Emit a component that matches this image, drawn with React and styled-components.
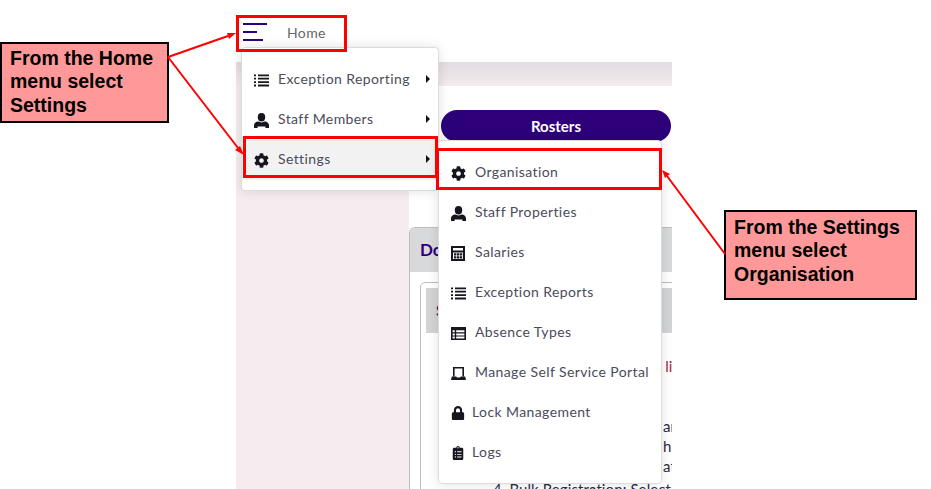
import React from 'react';
import styled, { createGlobalStyle } from 'styled-components';
import { FaCog, FaLock, FaClipboardList } from 'react-icons/fa';

const GlobalStyle = createGlobalStyle`
    html, body {
        margin: 0;
        background: #fff;
    }
    * {
        box-sizing: border-box;
    }
`;

const Page = styled.div`
    position: relative;
    width: 931px;
    height: 489px;
    overflow: hidden;
    background: #fff;
    padding-left: 236px;
    font-family: Lato, 'Noto Sans', sans-serif;
`;

const Frame = styled.div`
    position: relative;
    width: 436px;
    height: 489px;
    overflow: hidden;
    display: flex;
    flex-direction: column;
`;

const Navbar = styled.div`
    height: 62px;
    flex: none;
    padding: 23px 0 0 7px;
    background: #fff;
`;

const HomeLink = styled.div`
    display: flex;
    align-items: center;
    gap: 20px;
    height: 18px;
    color: #666;
    font-size: 14px;
    letter-spacing: 0.4px;
`;

const Body = styled.div`
    flex: 1;
    display: flex;
    min-height: 0;
    background: #f5ecef;
`;

const Sidebar = styled.div`
    width: 173px;
    flex: none;
    background: linear-gradient(#e2dbdf, #f5ecef 24px);
`;

const Content = styled.div`
    flex: 1;
    display: flex;
    flex-direction: column;
    min-width: 0;
`;

const Band = styled.div`
    height: 24px;
    flex: none;
    background: linear-gradient(#e2dbdf, #f3ebee);
`;

const Main = styled.div`
    flex: 1;
    background: #fff;
    padding-top: 24px;
    overflow: hidden;
`;

const RostersButton = styled.div`
    width: 230px;
    height: 32px;
    margin-left: 32px;
    padding-bottom: 1px;
    border-radius: 16px;
    background: #2d007a;
    color: #fff;
    font-size: 15px;
    font-weight: 700;
    display: flex;
    align-items: center;
    justify-content: center;
`;

const Panel = styled.div`
    width: 340px;
    margin-top: 85px;
    border: 1px solid #bdbdbd;
    border-bottom: 0;
    border-radius: 6px 0 0 0;
    padding-bottom: 20px;
`;

const PanelHeader = styled.div`
    height: 44px;
    padding-left: 10px;
    background: #d8d9db;
    color: #2d007a;
    font-size: 17px;
    font-weight: 700;
    line-height: 44px;
    border-radius: 5px 0 0 0;
`;

const InnerCard = styled.div`
    margin: 10px 0 0 10px;
    border: 1px solid #bdbdbd;
    border-radius: 5px 0 0 0;
    padding: 5px;
    height: 260px;
`;

const InnerHeader = styled.div`
    height: 45px;
    padding-left: 10px;
    background: #d3d4d6;
    color: #33273f;
    font-size: 15px;
    font-weight: 700;
    line-height: 45px;
`;

const NoteLine = styled.div`
    white-space: nowrap;
    font-size: 15px;
    letter-spacing: 0.1px;
    line-height: 20px;
    height: 20px;
    color: ${(p) => p.$color || '#2a2a44'};
    margin-top: ${(p) => p.$gap || 0}px;
    margin-left: ${(p) => p.$indent || 0}px;
`;

const Dropdown = styled.div`
    position: absolute;
    left: ${(p) => p.$left}px;
    top: ${(p) => p.$top}px;
    width: ${(p) => p.$width}px;
    padding: 12px 0 10px;
    background: #fff;
    border: 1px solid #dcdcdc;
    border-radius: 4px;
    box-shadow: 0 0 12px rgba(0, 0, 0, 0.12);
    z-index: 2;
`;

const MenuItem = styled.div`
    display: flex;
    align-items: center;
    height: 40px;
    padding-left: 12px;
    color: #4b4b5a;
    font-size: 14px;
    letter-spacing: 0.4px;
    background: ${(p) => (p.$active ? '#f2f2f2' : 'transparent')};
`;

const MenuIcon = styled.span`
    display: flex;
    align-items: center;
    width: ${(p) => (p.$narrow ? 21 : 24)}px;
    flex: none;
    color: #16161e;
    font-size: ${(p) => (p.$narrow ? 14 : 15)}px;
`;

const MenuLabel = styled.span`
    padding-bottom: 3px;
`;

const Caret = styled.span`
    width: 0;
    height: 0;
    margin: -3px 8px 0 auto;
    border-top: 4px solid transparent;
    border-bottom: 4px solid transparent;
    border-left: 4px solid #111;
`;

const RedBox = styled.div`
    position: absolute;
    left: ${(p) => p.$left}px;
    top: ${(p) => p.$top}px;
    width: ${(p) => p.$width}px;
    height: ${(p) => p.$height}px;
    border: 3px solid #f00;
    z-index: 3;
`;

const Callout = styled.div`
    position: absolute;
    left: ${(p) => p.$left}px;
    top: ${(p) => p.$top}px;
    width: ${(p) => p.$width}px;
    height: ${(p) => p.$height}px;
    padding: ${(p) => p.$pad}px 0 0 8px;
    border: 2px solid #000;
    background: #ff9999;
    color: #000;
    font-family: 'Liberation Sans', Arial, sans-serif;
    font-size: 19.5px;
    font-weight: 700;
    line-height: 23.4px;
    z-index: 4;
`;

const Arrows = styled.svg`
    position: absolute;
    left: 0;
    top: 0;
    z-index: 4;
`;

const ListIcon = () => (
    <svg width="15" height="13" viewBox="0 0 15 13" fill="currentColor">
        <path d="M0 .4h2v1.8H0zM0 3.8h2v1.8H0zM0 7.2h2V9H0zM0 10.6h2v1.8H0z" />
        <path d="M4 .4h11v1.8H4zM4 3.8h11v1.8H4zM4 7.2h11V9H4zM4 10.6h11v1.8H4z" />
    </svg>
);

const PersonIcon = () => (
    <svg width="15" height="15" viewBox="0 0 15 15" fill="currentColor">
        <ellipse cx="7.5" cy="4.2" rx="3.7" ry="4.2" />
        <path
            fillRule="evenodd"
            d="M0 15v-2.6C0 10.2 2.4 8.6 4.4 8.6c1.4 1.1 4.8 1.1 6.2 0 2 0 4.4 1.6 4.4 3.8V15zM3.6 15h7.8v-1.4H3.6z"
        />
    </svg>
);

const CalculatorIcon = () => (
    <svg width="14" height="15" viewBox="0 0 14 15" fill="currentColor">
        <path fillRule="evenodd" d="M0 0h14v15H0zM2 2v2.6h10V2zM2 6.4V13h10V6.4z" />
        <path d="M3 7.2h2.4v2.2H3zM6 7.2h2.4v2.2H6zM9 7.2h2.2v2.2H9zM3 10.2h2.4v2.2H3zM6 10.2h2.4v2.2H6zM9 10.2h2.2v2.2H9z" />
    </svg>
);

const TableIcon = () => (
    <svg width="15" height="13" viewBox="0 0 15 13" fill="currentColor">
        <path
            fillRule="evenodd"
            d="M0 0h15v13H0zM1.6 3.2v2h2.2v-2zM5.2 3.2v2h8.2v-2zM1.6 6.4v2h2.2v-2zM5.2 6.4v2h8.2v-2zM1.6 9.6v2h2.2v-2zM5.2 9.6v2h8.2v-2z"
        />
    </svg>
);

const PortalIcon = () => (
    <svg width="15" height="13" viewBox="0 0 15 13" fill="currentColor">
        <path fillRule="evenodd" d="M2 0h11v9.6h-1.6V1.6H3.6v8H2z" />
        <path d="M.8 9.6h4.4l.8 1h3l.8-1h4.4L15 13H0z" />
    </svg>
);

const mainItems = [
    { icon: <ListIcon />, label: 'Exception Reporting', caret: true },
    { icon: <PersonIcon />, label: 'Staff Members', caret: true },
    { icon: <FaCog />, label: 'Settings', caret: true, active: true }
];

const settingsItems = [
    { icon: <FaCog />, label: 'Organisation' },
    { icon: <PersonIcon />, label: 'Staff Properties' },
    { icon: <CalculatorIcon />, label: 'Salaries' },
    { icon: <ListIcon />, label: 'Exception Reports' },
    { icon: <TableIcon />, label: 'Absence Types' },
    { icon: <PortalIcon />, label: 'Manage Self Service Portal' },
    { icon: <FaLock />, label: 'Lock Management', narrow: true },
    { icon: <FaClipboardList />, label: 'Logs', narrow: true }
];

const Menu = ({ items, ...rest }) => (
    <Dropdown {...rest}>
        {items.map((item) => (
            <MenuItem key={item.label} $active={item.active}>
                <MenuIcon $narrow={item.narrow}>{item.icon}</MenuIcon>
                <MenuLabel>{item.label}</MenuLabel>
                {item.caret && <Caret />}
            </MenuItem>
        ))}
    </Dropdown>
);

const HamburgerIcon = () => (
    <svg width="24" height="18" viewBox="0 0 24 18" fill="none" stroke="#2d007a" strokeWidth="2">
        <path d="M0 1h24M0 9h14M0 17h20" />
    </svg>
);

const ArrowLine = ({ d, head }) => (
    <>
        <path d={d} fill="none" stroke="#f00" strokeWidth="2" />
        <polygon points={head} fill="#f00" />
    </>
);

const App = () => (
    <Page>
        <GlobalStyle />
        <Frame>
            <Navbar>
                <HomeLink>
                    <HamburgerIcon />
                    Home
                </HomeLink>
            </Navbar>
            <Body>
                <Sidebar />
                <Content>
                    <Band />
                    <Main>
                        <RostersButton>Rosters</RostersButton>
                        <Panel>
                            <PanelHeader>Do</PanelHeader>
                            <InnerCard>
                                <InnerHeader>S</InnerHeader>
                                <NoteLine $color="#a0233a" $gap={23} $indent={230}>r li</NoteLine>
                                <NoteLine $gap={40} $indent={237}>an</NoteLine>
                                <NoteLine $indent={237}>hb</NoteLine>
                                <NoteLine $indent={237}>at</NoteLine>
                                <NoteLine $gap={3} $indent={67}>4. Bulk Registration: Select</NoteLine>
                            </InnerCard>
                        </Panel>
                    </Main>
                </Content>
            </Body>
        </Frame>
        <Menu items={mainItems} $left={241} $top={47} $width={198} />
        <Menu items={settingsItems} $left={438} $top={140} $width={224} />
        <RedBox $left={236} $top={15} $width={111} $height={37} />
        <RedBox $left={243} $top={136} $width={195} $height={42} />
        <RedBox $left={436} $top={148} $width={226} $height={42} />
        <Callout $left={0} $top={42} $width={169} $height={81} $pad={3}>
            From the Home
            <br />
            menu select
            <br />
            Settings
        </Callout>
        <Callout $left={724} $top={210} $width={193} $height={90} $pad={4}>
            From the Settings
            <br />
            menu select
            <br />
            Organisation
        </Callout>
        <Arrows width="931" height="489">
            <ArrowLine d="M168 57L228 36" head="236,33 227,33 229,39" />
            <ArrowLine d="M168 57L238 148" head="244,155 235,150 240,146" />
            <ArrowLine d="M725 254L667 176" head="662,170 670,174 665,178" />
        </Arrows>
    </Page>
);

export default App;
